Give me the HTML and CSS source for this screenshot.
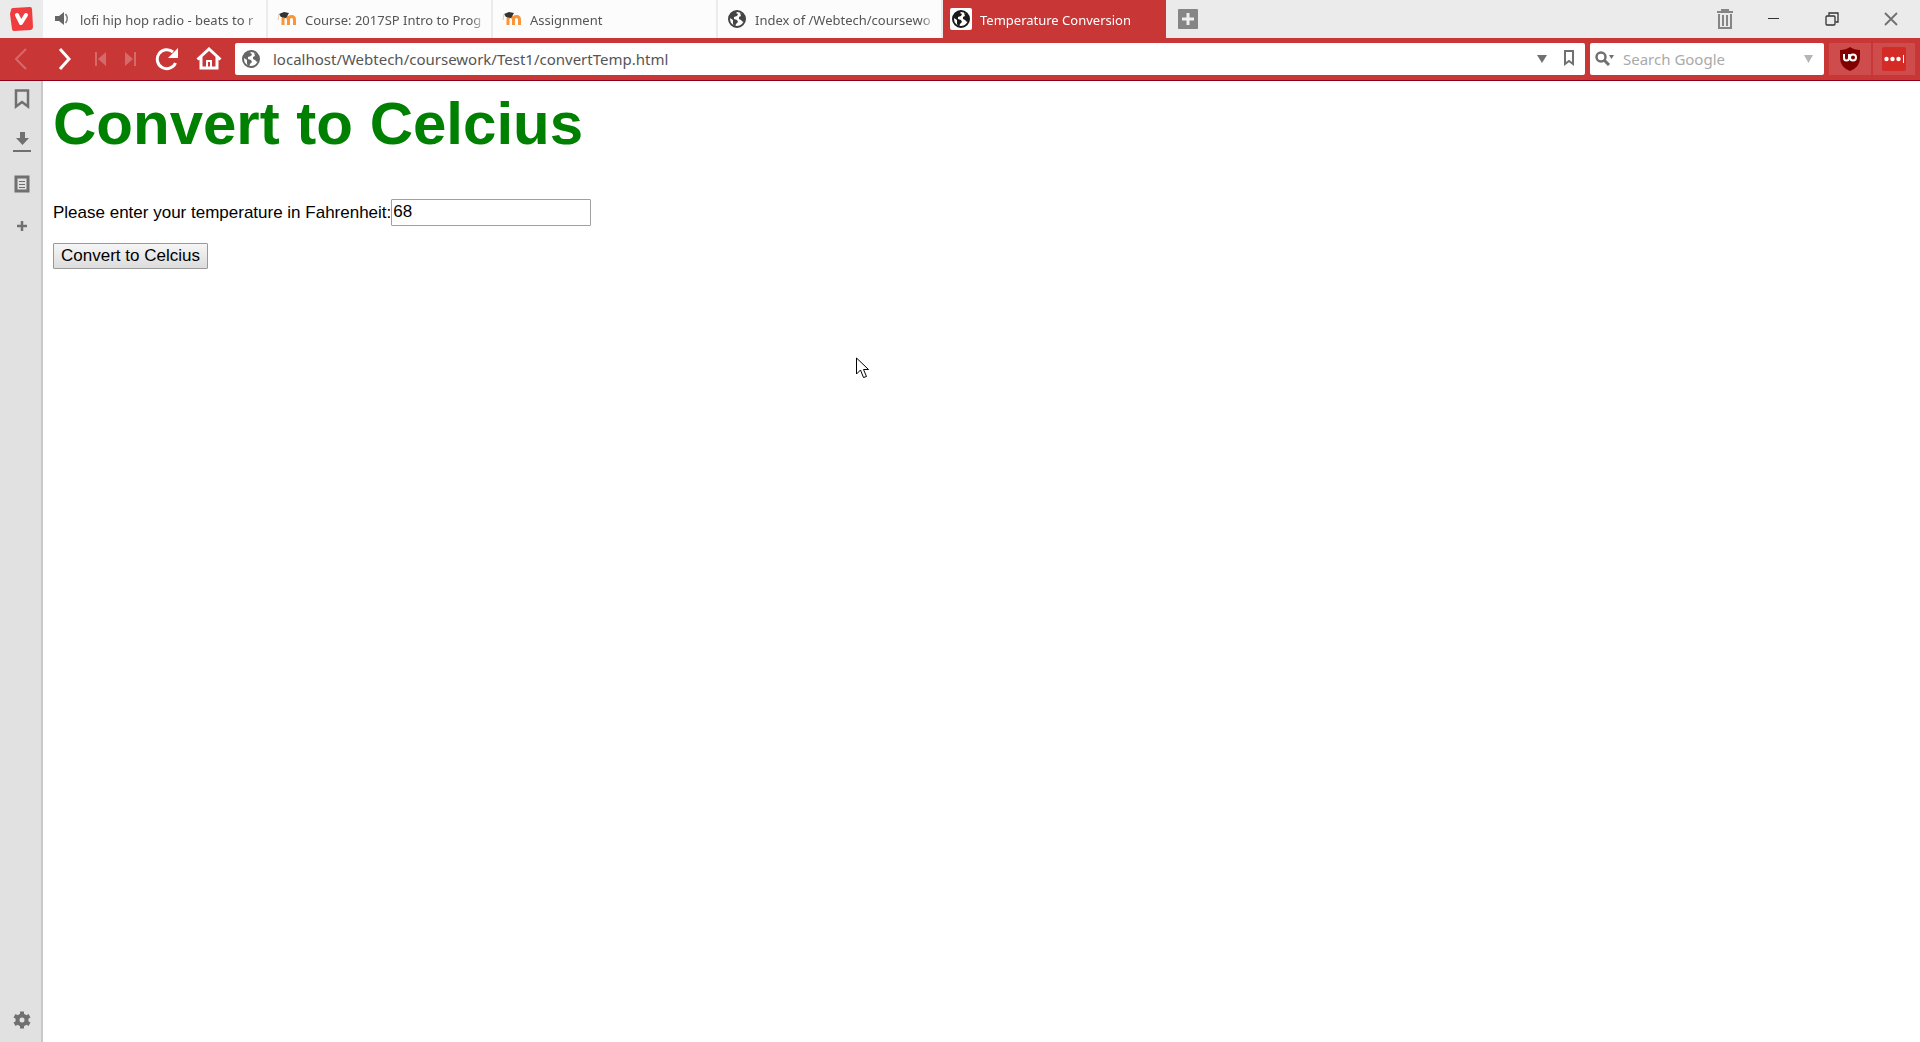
FILE: index.html
```html
<!DOCTYPE html>
<html lang="en">
<head>
<meta charset="utf-8">
<title>Temperature Conversion</title>
<link rel="stylesheet" href="styles.css">
</head>
<body>
<svg class="defs" aria-hidden="true">
  <symbol id="globe" viewBox="0 0 18 18">
    <circle cx="9" cy="9" r="8" fill="none" stroke="currentColor" stroke-width="2"/>
    <path fill="currentColor" d="M2 4 6 1h4L8 3l2 1-1 2-3 1v2l3 1 1 2-2 2-1 3-2-3V10L2 8zM12 3l3 1 2 4v3l-2 1-2-2-2-1V7l2-1z"/>
  </symbol>
  <symbol id="moodle" viewBox="0 0 20 16">
    <path fill="none" stroke="#f7963a" stroke-width="3" d="M6 14V8.500q0-3 2.500-3t3 3V14m0-5.500q0-3 3-3t3 3V14"/>
    <path fill="#333" d="m2 3 5-2 5 1-3 5-5-1z"/>
    <path fill="none" stroke="#e8c6ab" d="M2 3 1 9"/>
  </symbol>
</svg>
<div class="browser">
  <header class="tabbar">
    <button class="menu" aria-label="Menu">
      <svg width="25" height="26" viewBox="0 0 25 26"><path fill="#ee3c3f" d="M2 4Q2 2 4 2L21 1q2 0 2 2l1 18q0 2-2 3L5 25q-2 0-2-2L1 8z"/><path fill="none" stroke="#fff" stroke-width="4" stroke-linecap="round" stroke-linejoin="round" d="m8 9 4 8 5-8"/></svg>
    </button>
    <nav class="tabs" aria-label="Tabs">
      <a class="tab" href="#"><svg class="favicon" viewBox="0 0 20 18"><path fill="#666" d="M3 6h4l5-4v13l-5-4H3z"/><path fill="none" stroke="#777" stroke-width="1.500" d="M13.500 4q3.500 4.500 0 9"/></svg><span class="title">lofi hip hop radio - beats to r</span></a>
      <a class="tab" href="#"><svg class="favicon" viewBox="0 0 20 16"><use href="#moodle"/></svg><span class="title">Course: 2017SP Intro to Prog</span></a>
      <a class="tab" href="#"><svg class="favicon" viewBox="0 0 20 16"><use href="#moodle"/></svg><span class="title">Assignment</span></a>
      <a class="tab" href="#"><svg class="favicon dark" viewBox="0 0 18 18"><use href="#globe"/></svg><span class="title">Index of /Webtech/coursewo</span></a>
      <a class="tab active" href="#"><span class="badge"><svg viewBox="0 0 18 18"><use href="#globe"/></svg></span><span class="title">Temperature Conversion</span></a>
    </nav>
    <button class="newtab" aria-label="New tab"><svg width="20" height="20"><rect width="20" height="20" rx="1" fill="#858585"/><path stroke="#eee" stroke-width="3" d="M10 4v12M4 10h12"/></svg></button>
    <div class="window">
      <button class="trash" aria-label="Closed tabs"><svg width="16" height="20" fill="none" stroke="#858585"><path stroke-width="2" d="M0 3h16M2 5v14h12V5"/><path stroke-width="2" d="M4 1h8M6 6v11M10 6v11"/></svg></button>
      <button aria-label="Minimize"><svg width="14" height="14" stroke="#333"><path d="M2 6.500h11"/></svg></button>
      <button aria-label="Restore"><svg width="14" height="14" fill="none" stroke="#333" stroke-width="1.300"><rect x="1" y="4" width="9" height="9" rx="1"/><path d="M4 3.500V1h9v9h-2.500"/></svg></button>
      <button aria-label="Close"><svg width="14" height="14" stroke="#707070" stroke-width="1.800"><path d="m1 1 12 12M13 1 1 13"/></svg></button>
    </div>
  </header>
  <div class="toolbar">
    <div class="nav">
      <button class="wide faded" aria-label="Back"><svg width="14" height="22"><path d="M11 1 1 11l10 10"/></svg></button>
      <button class="wide" aria-label="Forward"><svg class="bold" width="14" height="22"><path d="m2 1 9 10-9 10"/></svg></button>
      <button class="faded" aria-label="Rewind"><svg width="12" height="14"><path d="M1 0v14"/><path class="solid" d="M11 0v14L3 7z"/></svg></button>
      <button class="faded" aria-label="Fast forward"><svg width="12" height="14"><path d="M11 0v14"/><path class="solid" d="M1 0v14l8-7z"/></svg></button>
      <button class="wide" aria-label="Reload"><svg class="bold" width="24" height="24"><path d="M19 5a9.500 9.500 0 1 0 2.500 11"/><path class="solid" d="M24 1v10H14z"/></svg></button>
      <button class="wide" aria-label="Home"><svg class="bold" width="26" height="24"><path d="M1.500 12.500 13 2l11.500 10.500M5 10v11h16V10"/><path class="solid" d="M10 21v-7h2v7zM14 21v-7h2v7zM10 13h6v2h-6z"/></svg></button>
    </div>
    <div class="address">
      <svg class="site" width="18" height="18"><use href="#globe"/></svg>
      <input type="text" aria-label="Address" value="localhost/Webtech/coursework/Test1/convertTemp.html">
      <button aria-label="History"><svg width="10" height="9"><path fill="#707070" d="M0 0h10L5 8z"/></svg></button>
      <button aria-label="Bookmark page"><svg width="12" height="18" fill="none" stroke="#707070" stroke-width="2"><path d="M2 1h8v13l-4-3-4 3z"/></svg></button>
    </div>
    <div class="search">
      <svg width="19" height="16"><circle cx="6" cy="6" r="4.500" fill="none" stroke="#707070" stroke-width="2.500"/><path stroke="#707070" stroke-width="3" d="m9 9 5 5"/><path fill="#707070" d="M14 4h5l-2.500 4z"/></svg>
      <input type="text" aria-label="Search" placeholder="Search Google">
      <button aria-label="Search history"><svg width="10" height="9"><path fill="#b5b5b5" d="M0 0h9L4.500 8z"/></svg></button>
    </div>
    <button class="extension" aria-label="uBlock Origin"><svg width="22" height="24"><path fill="#800000" d="M11 0q4 3 10 3v8q0 9-10 13Q1 20 1 11V3q6 0 10-3z"/><path fill="none" stroke="#fff" stroke-width="2" d="M5 7v4q0 2.500 2.500 2.500T10 11V7"/><circle cx="14" cy="10.500" r="3" fill="none" stroke="#fff" stroke-width="2"/></svg></button>
    <button class="extension" aria-label="LastPass"><svg width="24" height="24"><rect width="24" height="24" rx="2" fill="#d52b27"/><g fill="#fff"><circle cx="4.500" cy="12" r="2.200"/><circle cx="10.500" cy="12" r="2.200"/><circle cx="16.500" cy="12" r="2.200"/><path d="M21 8h1v8h-1z"/></g></svg></button>
  </div>
  <div class="content">
    <aside class="panel">
      <button aria-label="Bookmarks"><svg width="16" height="20"><path d="M2 1.500h12v16L8 13l-6 4.500z"/></svg></button>
      <button aria-label="Downloads"><svg width="18" height="20"><path class="solid" d="M7 0h5v6h4l-6.500 7L3 6h4z"/><path stroke-width="2" d="M0 19h18"/></svg></button>
      <button aria-label="Notes"><svg width="16" height="18"><path stroke-width="3" d="M2 2h12v14H2z"/><path stroke-width="1" d="M5 6.500h6M5 9.500h6M5 12.500h6"/></svg></button>
      <button aria-label="Add web panel"><svg width="12" height="12"><path d="M6 1v10M1 6h10"/></svg></button>
      <button class="settings" aria-label="Settings"><svg width="18" height="18"><circle cx="9" cy="9" r="4.500" stroke-width="4"/><path stroke-width="4" d="M9 .500v4M9 13.500v4M1.500 4.700l3.500 2M13 11.300l3.500 2M1.500 13.300l3.500-2M13 6.700l3.500-2"/></svg></button>
    </aside>
    <main class="page">
      <h1>Convert to Celcius</h1>
      <form>
        <div class="field">
          <label for="fahrenheit">Please enter your temperature in Fahrenheit:</label>
          <input id="fahrenheit" type="text" value="68">
        </div>
        <button type="button">Convert to Celcius</button>
      </form>
      <svg class="pointer" width="13" height="22" viewBox="0 0 13 22"><path fill="#fff" stroke="#000" d="M.500 1v16l4-4 3 7.500 3-1-3-7h5z"/></svg>
    </main>
  </div>
</div>
</body>
</html>
```
FILE: styles.css
```css
* {
  box-sizing: border-box;
}

body {
  margin: 0;
  background: #fff;
  font-family: "Noto Sans", "Open Sans", sans-serif;
}

button {
  display: flex;
  align-items: center;
  justify-content: center;
  margin: 0;
  padding: 0;
  border: 0;
  background: none;
}

svg {
  display: block;
  flex: none;
}

.defs {
  position: absolute;
  width: 0;
  height: 0;
}

.browser {
  display: flex;
  flex-direction: column;
  min-height: 100vh;
}

/* Tab bar */
.tabbar {
  display: flex;
  height: 38px;
  background: #ebebeb;
}

.menu {
  width: 43px;
}

.tabs {
  display: grid;
  grid-template-columns: repeat(5, minmax(0, 1fr));
  gap: 2px;
  flex: 0 1 1123px;
  min-width: 0;
}

.tab {
  display: flex;
  align-items: center;
  gap: 8px;
  min-width: 0;
  padding: 0 4px 0 9px;
  background: #fcfcfc;
  color: #555;
  font-size: 13px;
  line-height: 20px;
  text-decoration: none;
}

.tab.active {
  padding-left: 7px;
  background: #c93636;
  color: #fff;
}

.favicon {
  width: 20px;
  height: 18px;
}

.dark {
  color: #444;
}

.badge {
  flex: none;
  padding: 2px;
  border-radius: 2px;
  background: #fff;
  color: #1a1a1a;
}

.badge svg {
  width: 18px;
  height: 18px;
}

.title {
  flex: 1;
  padding-top: 2px;
  overflow: hidden;
  white-space: nowrap;
  mask-image: linear-gradient(to left, transparent, #000 16px);
}

.newtab {
  width: 44px;
}

.window {
  display: flex;
  margin-left: auto;
}

.window button {
  width: 59px;
}

.window .trash {
  width: 36px;
}

/* Address bar */
.toolbar {
  display: flex;
  gap: 5px;
  height: 43px;
  padding: 5px 5px 5px 0;
  border-bottom: 1px solid #8f0018;
  background: #c93636;
}

.nav {
  display: flex;
}

.nav button {
  width: 29px;
}

.nav .wide {
  width: 43px;
}

.nav svg {
  fill: none;
  stroke: #fff;
  stroke-width: 2;
}

.nav .bold {
  stroke-width: 3;
}

.nav .solid {
  fill: #fff;
  stroke: none;
}

.faded {
  opacity: 0.25;
}

.address,
.search {
  display: flex;
  align-items: center;
  border-radius: 2px;
  background: #fff;
}

.address {
  flex: 1;
  gap: 13px;
  padding: 0 9px 0 7px;
}

.site {
  color: #666;
}

.address button {
  width: 14px;
}

.search {
  gap: 9px;
  width: 234px;
  padding: 0 10px 0 5px;
}

.address input,
.search input {
  flex: 1;
  min-width: 0;
  padding: 0;
  border: 0;
  outline: 0;
  background: none;
  color: #555;
  font: 15px/20px "Noto Sans", "Open Sans", sans-serif;
}

.search input::placeholder {
  color: #aaa;
}

.extension {
  width: 42px;
  background: #cf4c4c;
}

.extension + .extension {
  margin-left: -3px;
}

/* Side panel and page */
.content {
  display: flex;
  flex: 1;
}

.panel {
  display: flex;
  flex-direction: column;
  width: 43px;
  padding: 0 0 5px 2px;
  border-right: 2px solid #c8c8c8;
  background: #e1e1e1;
}

.panel button {
  height: 42px;
}

.panel button:first-child {
  height: 36px;
  margin-bottom: 4px;
}

.panel svg {
  fill: none;
  stroke: #707070;
  stroke-width: 2.5;
}

.panel .solid {
  fill: #707070;
  stroke: none;
}

.panel .settings {
  height: 34px;
  margin-top: auto;
}

.page {
  flex: 1;
  padding: 8px 10px;
  color: #000;
  font-family: "Liberation Sans", Arial, sans-serif;
  font-size: 17px;
}

.page h1 {
  margin: 0 0 40px;
  color: #008000;
  font-size: 60px;
  line-height: 70px;
}

.field {
  display: flex;
  align-items: center;
  margin-bottom: 17px;
}

.field label {
  line-height: 20px;
}

.field input {
  width: 200px;
  height: 27px;
  padding: 0 1px 2px;
  border: 1px solid #a0a0a0;
  border-radius: 1px;
  font: inherit;
}

.page form button {
  height: 26px;
  padding: 0 7px;
  border: 1px solid #999;
  border-radius: 1px;
  background: linear-gradient(#f6f6f6, #dcdcdc);
  color: #000;
  font: inherit;
}

.pointer {
  position: absolute;
  top: 357px;
  left: 856px;
}
```
